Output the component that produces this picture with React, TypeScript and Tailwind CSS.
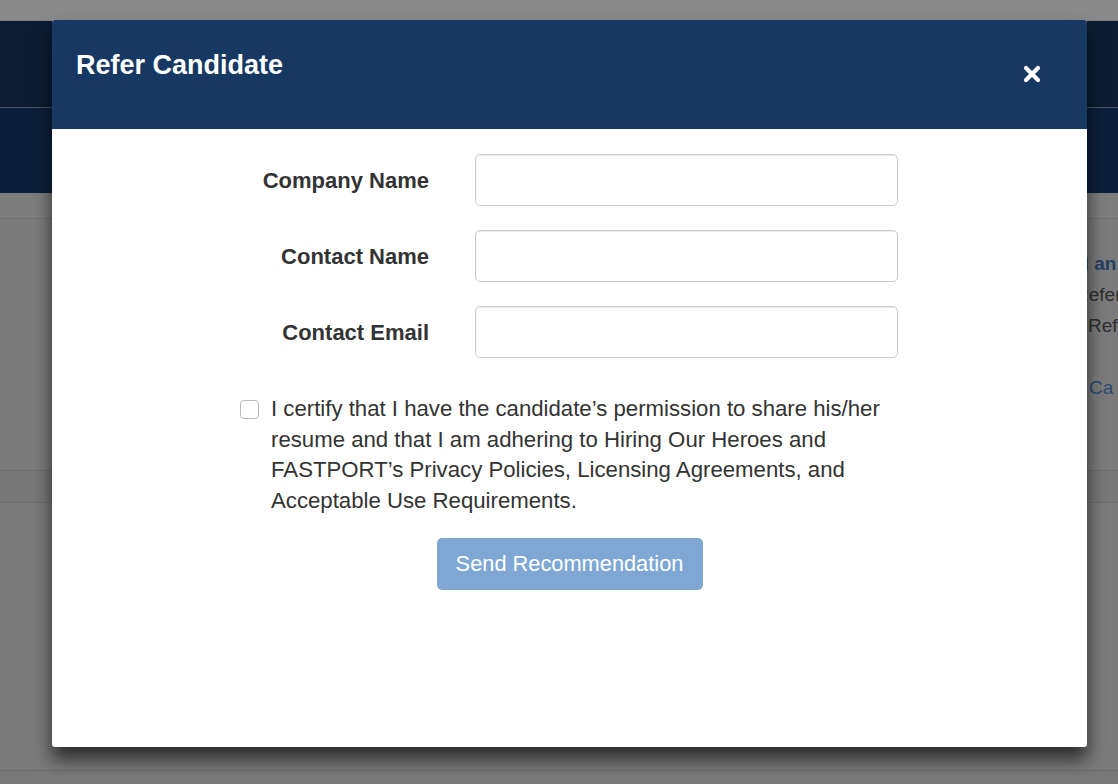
import React from "react";

export default function App() {
  return (
    <div
      className="relative w-[1118px] h-[784px] overflow-hidden bg-[#7a7a7a]"
      style={{ fontFamily: '"Liberation Sans", Arial, sans-serif' }}
    >
      {/* background page (dimmed) */}
      <div className="flex flex-col">
        <div className="h-[21px] bg-[#8a8a8a] border-b border-[#7f7f7f]" />
        <div className="h-[86px] bg-[#0b1c32]" />
        <div className="h-[1px] bg-[#4a5566]" />
        <div className="h-[85px] bg-[#0c1f3a]" />
        <div className="h-[25px] bg-[#7d7d7d]" />
        <div className="h-[1px] bg-[#707070]" />
        <div className="h-[251px] bg-[#7b7b7b] flex flex-col pl-[1040px] pt-[29px] text-[19px] leading-[31px] whitespace-nowrap overflow-hidden">
          <div className="font-bold text-[#243f62] pl-[32px]">ld an</div>
          <div className="text-[#2e2e2e] pl-[35px]">Refer</div>
          <div className="text-[#2e2e2e] pl-[48px]">Refe</div>
          <div className="text-[#2c4a70] mt-[31px] pl-[49px]">Ca</div>
        </div>
        <div className="h-[1px] bg-[#6e6e6e]" />
        <div className="h-[31px] bg-[#777777]" />
        <div className="h-[1px] bg-[#6e6e6e]" />
        <div className="h-[267px] bg-[#7a7a7a]" />
        <div className="h-[1px] bg-[#6c6c6c]" />
        <div className="h-[14px] bg-[#787878]" />
      </div>

      {/* modal */}
      <div className="absolute left-[52px] top-[20px] w-[1035px] h-[727px] bg-white rounded-[3px] shadow-[0_12px_18px_rgba(0,0,0,0.65)] overflow-hidden flex flex-col">
        <div className="h-[109px] bg-[#163863] flex items-start justify-between pl-[24px] pr-[45px] shrink-0">
          <div className="text-white font-bold text-[27px] leading-[32px] mt-[29px]">
            Refer Candidate
          </div>
          <div className="mt-[44px]">
            <svg width="20" height="20" viewBox="0 0 20 20">
              <path
                d="M4 4 L16 16 M16 4 L4 16"
                stroke="white"
                strokeWidth="4.2"
                strokeLinecap="round"
              />
            </svg>
          </div>
        </div>

        <div className="flex flex-col pt-[25px]">
          {["Company Name", "Contact Name", "Contact Email"].map((label) => (
            <div key={label} className="flex items-center h-[52px] mb-[24px]">
              <div className="w-[377px] text-right font-bold text-[22px] text-[#333333]">
                {label}
              </div>
              <div className="ml-[46px] w-[423px] h-[52px] rounded-[5px] border border-[#cccccc] bg-white shadow-[inset_0_1px_1px_rgba(0,0,0,0.075)]" />
            </div>
          ))}

          <div className="flex items-start pl-[188px] mt-[12px]">
            <div className="mt-[6px] w-[19px] h-[19px] rounded-[4px] border border-[#b8b8b8] bg-white shrink-0" />
            <div className="ml-[12px] text-[22.2px] leading-[30.5px] text-[#333333]">
              I certify that I have the candidate’s permission to share his/her
              <br />
              resume and that I am adhering to Hiring Our Heroes and
              <br />
              FASTPORT’s Privacy Policies, Licensing Agreements, and
              <br />
              Acceptable Use Requirements.
            </div>
          </div>

          <div className="flex justify-center mt-[22px]">
            <div className="w-[266px] h-[52px] rounded-[5px] bg-[#7ea8d3] text-white text-[21.8px] flex items-center justify-center">
              Send Recommendation
            </div>
          </div>
        </div>
      </div>
    </div>
  );
}
